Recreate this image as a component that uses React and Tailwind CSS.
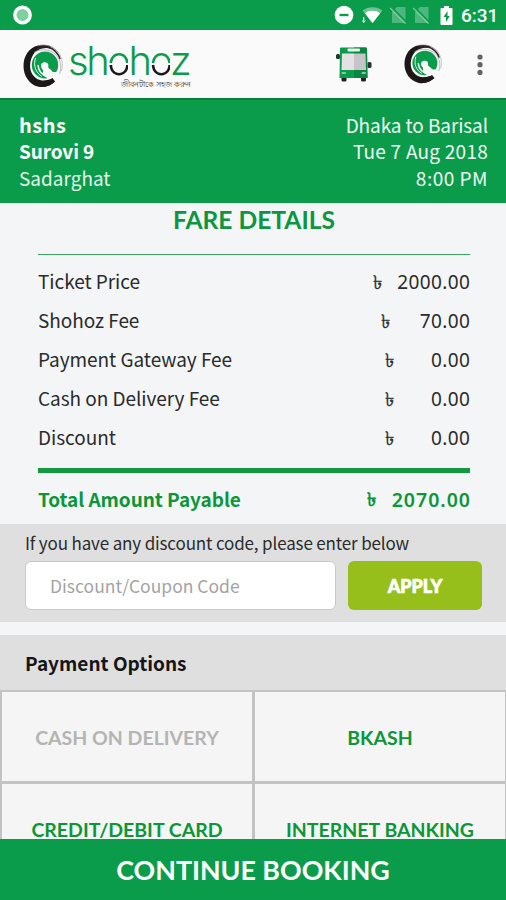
const LABEL = "font-['Noto_Sans_CJK_SC','Noto_Sans',sans-serif]";
const HEADING = "font-['Lato','Noto_Sans',sans-serif]";

const fares = [
  { label: 'Ticket Price', amount: '2000.00', width: 'w-[97px]' },
  { label: 'Shohoz Fee', amount: '70.00', width: 'w-[89px]' },
  { label: 'Payment Gateway Fee', amount: '0.00', width: 'w-[85px]' },
  { label: 'Cash on Delivery Fee', amount: '0.00', width: 'w-[85px]' },
  { label: 'Discount', amount: '0.00', width: 'w-[85px]' },
];

const options = [
  { name: 'CASH ON DELIVERY', disabled: true },
  { name: 'BKASH' },
  { name: 'CREDIT/DEBIT CARD' },
  { name: 'INTERNET BANKING' },
];

// Brush circle with the green disc inside
function BrandMark({ className }) {
  return (
    <svg viewBox="0 0 40 44" preserveAspectRatio="none" className={className} fill="none">
      <path d="M32 37.500C28 41.500 22 44 15.500 42.800C6 40.500 .5 31.500 .5 22C.5 12 6 3.500 15 1.500C19 .6 24 .8 28 2.500L27 4.500C20 3 13 6 10 11C6.500 17 6 25 9.500 30.500C14 37 22 38.500 29 34.500Z" fill="#1d1718" />
      <path d="M14 5C20 1.500 28 2.500 32.500 7.500C35 10 36.500 12.500 37 15" stroke="#2b2425" strokeWidth="1.700" />
      <path d="M14 2C22 -.5 31 2 35.500 9" stroke="#8a8586" strokeWidth=".8" />
      <path d="M34 6.500C39 12 40.500 20 38.500 27" stroke="#b9b6b6" strokeWidth=".8" />
      <path d="M11 8.500C19 3.500 30 5.500 35 13C38 18 38.500 25 36.500 30" stroke="#a9a5a6" strokeWidth=".8" />
      <ellipse cx="22" cy="21" rx="13.200" ry="13.500" fill="#0b9c4b" />
      <path d="M12.500 14C10 22 13 29 19 32.500" stroke="#fafafa" strokeWidth=".9" />
      <path d="M15 21C15.500 28 19 31.500 26 33" stroke="#fafafa" strokeWidth="1.500" />
      <path d="M19.500 24.500C20.500 27.500 19.500 29 20.500 31.500L26 35.500L33 37L38 31L34 28.500C31.500 27.500 30 29 28.500 26.500C27.500 25 26 25 25 23Z" fill="#fafafa" />
      <circle cx="21.700" cy="22" r="3.700" fill="#fafafa" />
      <path d="M32 37.500L29.500 34C27 35.500 24 36.700 20.500 36.500L20 43C25 42.500 29 40.500 32 37.500Z" fill="#1d1718" />
    </svg>
  );
}

function BusIcon() {
  return (
    <svg viewBox="0 0 36 35" className="w-9 h-[35px]">
      <rect x="0" y="7" width="4" height="5" rx="1.500" fill="#26352c" />
      <rect x="31.500" y="15" width="4" height="6" rx="1.500" fill="#26352c" />
      <rect x="5.500" y="28" width="5" height="6.500" rx="1.500" fill="#222" />
      <rect x="25" y="28" width="5" height="6.500" rx="1.500" fill="#222" />
      <path d="M4 1.500Q4 .5 5 .5H30Q31 .5 31 2L31.500 31H3.500Z" fill="#0b9c4b" />
      <path d="M18 .5H30Q31 .5 31 2L31.500 31H18Z" fill="#088741" />
      <rect x="11.500" y="1.600" width="12.500" height="3" rx="1" fill="#e8f3ec" />
      <path d="M6 6.500H18V23H5.500Z" fill="#e3e1e4" />
      <path d="M18 6.500H29.500L30 23H18Z" fill="#c6c4c8" />
      <rect x="5.500" y="25" width="4.500" height="2" rx="1" fill="#8fc6a5" />
      <rect x="25.500" y="25" width="4.500" height="2" rx="1" fill="#8fc6a5" />
    </svg>
  );
}

function NoSim() {
  return (
    <svg viewBox="0 0 18 18" className="w-[18px] h-[18px]">
      <path d="M7 1H15.500V17H2V6Z" fill="#fff" opacity=".28" />
      <path d="M1 1.500L16.500 17" stroke="#0b9c4b" strokeWidth="2.600" />
      <path d="M0 2L15.500 17.500" stroke="#fff" strokeWidth="1.200" opacity=".5" />
    </svg>
  );
}

function StatusBar() {
  return (
    <div className="h-[30px] shrink-0 bg-[#0b9c4b] flex items-center justify-between pl-[13px] pr-[9px]">
      <svg viewBox="0 0 20 20" className="w-5 h-5">
        <circle cx="9.500" cy="10" r="7.700" fill="#7fcf9f" stroke="#fff" strokeWidth="3.400" />
      </svg>
      <div className="flex items-center">
        <svg viewBox="0 0 20 20" className="w-5 h-5 mr-[8px]">
          <circle cx="10" cy="10" r="9.300" fill="#fff" />
          <rect x="5.500" y="8.800" width="9" height="2.400" fill="#0b9c4b" />
        </svg>
        <svg viewBox="0 0 21 18" className="w-[21px] h-[18px] mr-[7px]">
          <path d="M.5 4.500C6 0 15 0 20.500 4.500L10.500 17Z" fill="#fff" opacity=".4" />
          <path d="M3 7.200C7.500 4 13.500 4 18.200 7.200L10.500 17Z" fill="#fff" />
          <path d="M1.800 11V16M.3 14.500L1.800 16.500L3.300 14.500" stroke="#fff" strokeWidth="1" fill="none" />
        </svg>
        <div className="mr-[5px]"><NoSim /></div>
        <div className="mr-[9px]"><NoSim /></div>
        <svg viewBox="0 0 13 19" className="w-[13px] h-[19px] mr-[8px]">
          <path d="M4 0H9V2H11.500Q12.500 2 12.500 3V18Q12.500 19 11.500 19H1.500Q.5 19 .5 18V3Q.5 2 1.500 2H4Z" fill="#fff" />
          <path d="M7.500 5L3.500 11H6V16L9.800 10H7.500Z" fill="#0b9c4b" />
        </svg>
        <span className="font-['Roboto',sans-serif] font-medium text-[19px] leading-none text-white w-[36px] pt-px">6:31</span>
      </div>
    </div>
  );
}

function SplitO() {
  return (
    <span className="bg-[linear-gradient(to_bottom,#0b9c4b_0_55%,transparent_55%_60%,#1d1718_60%)] bg-clip-text text-transparent">o</span>
  );
}

function AppBar() {
  return (
    <div className="h-[70px] shrink-0 bg-[#fafafa] border-b-2 border-[#07803a] flex items-start">
      <BrandMark className="w-10 h-[44px] ml-[23px] mt-[14px]" />
      <div className="ml-[5px] mt-[14px] w-[128px] flex flex-col">
        <div className="h-[34px] leading-[34px] text-[40px] font-light tracking-[-2.500px] text-[#0b9c4b] font-['Inter',sans-serif] whitespace-nowrap">
          sh<SplitO />h<SplitO />z
        </div>
        <div className="h-[12px] text-[8px] leading-[12px] text-right text-[#333] pr-[5px] whitespace-nowrap">জীবনটাকে সহজ করুন</div>
      </div>
      <div className="ml-[140px] mt-[17px]"><BusIcon /></div>
      <BrandMark className="w-[38px] h-[40px] ml-[32px] mt-[14px]" />
      <svg viewBox="0 0 6 22" className="w-1.5 h-[22px] ml-[35px] mt-[24px]" fill="#626262">
        <circle cx="3" cy="3" r="2.600" />
        <circle cx="3" cy="10.700" r="2.600" />
        <circle cx="3" cy="18.400" r="2.600" />
      </svg>
    </div>
  );
}

function TripSummary() {
  return (
    <div className={`h-[103px] shrink-0 bg-[#0b9c4b] text-white flex justify-between pl-[19px] pr-[18px] pt-[12px] text-[19px] leading-[26.4px] ${LABEL}`}>
      <div>
        <p className="font-bold text-[20px] tracking-[0.500px]">hshs</p>
        <p className="font-bold tracking-[-0.1px]">Surovi 9</p>
        <p className="text-[#e3f5ea]">Sadarghat</p>
      </div>
      <div className="text-right text-[#f0faf4]">
        <p className="tracking-[-0.1px]">Dhaka to Barisal</p>
        <p className="tracking-[0.250px]">Tue 7 Aug 2018</p>
        <p className="tracking-[0.500px]">8:00 PM</p>
      </div>
    </div>
  );
}

function FareDetails() {
  return (
    <div className="h-[321px] shrink-0 pl-[38px] pr-9 bg-[#f3f5f7]">
      <h2 className={`h-[52px] border-b border-[#3ea35f] text-center text-[24.6px] leading-[33px] font-bold text-[#0d9640] ${HEADING}`}>FARE DETAILS</h2>
      <div className="pt-[6px] text-[#2b2b2b]">
        {fares.map((f) => (
          <div key={f.label} className="h-[39px] flex justify-between text-[19px] leading-[39px]">
            <span className={`tracking-[-0.050px] ${LABEL}`}>{f.label}</span>
            <span className={`flex justify-between pt-[2px] font-['Noto_Sans',sans-serif] ${f.width}`}>
              <span className="font-medium [-webkit-text-stroke:0.300px_#2b2b2b]">৳</span>
              <span className="tracking-[0.400px] -mr-[0.400px]">{f.amount}</span>
            </span>
          </div>
        ))}
      </div>
      <div className="mt-[12px] h-[5px] bg-[#129a43]" />
      <div className="h-[51px] flex justify-between text-[19px] leading-[51px] font-semibold text-[#0d9637]">
        <span className={`font-bold tracking-[-0.050px] ${LABEL}`}>Total Amount Payable</span>
        <span className="flex justify-between w-[103px] pt-px font-['Noto_Sans',sans-serif]">
          <span>৳</span>
          <span className="text-[19.5px] tracking-[1px] -mr-px">2070.00</span>
        </span>
      </div>
    </div>
  );
}

function DiscountForm() {
  return (
    <div className={`h-[98px] shrink-0 bg-[#dfdfdf] pl-[25px] pr-6 ${LABEL}`}>
      <p className="h-[37px] leading-[38px] text-[17px] tracking-[-0.150px] text-[#2b2b2b] whitespace-nowrap">If you have any discount code, please enter below</p>
      <div className="flex justify-between">
        <input
          type="text"
          placeholder="Discount/Coupon Code"
          className="w-[311px] h-[49px] rounded-md border border-[#c9c9c9] bg-white pl-6 text-[17.5px] placeholder:text-[#a3a3a3] outline-none"
        />
        <button className="w-[134px] h-[49px] rounded-md bg-[#96bf1b] text-white text-[18px] pt-[2px] font-black [-webkit-text-stroke:0.700px_white] font-['Lato',sans-serif]">APPLY</button>
      </div>
    </div>
  );
}

function PaymentOptions() {
  return (
    <div className="mt-[13px] flex-1 min-h-0 overflow-hidden flex flex-col">
      <h3 className={`h-[55px] shrink-0 bg-[#dfdfdf] pl-[25px] text-[19px] leading-[56px] font-bold text-[#151515] ${LABEL}`}>Payment Options</h3>
      <div className="grid grid-cols-2 gap-[3px] px-[2px] pr-px pt-[2px] bg-[#c3c3c3]">
        {options.map((o) => (
          <div
            key={o.name}
            className={`h-[89px] bg-[#f5f5f5] flex items-center justify-center pt-[3px] text-[19.5px] font-bold whitespace-nowrap ${HEADING} ${o.disabled ? 'text-[#b4b4b4]' : 'text-[#0d9637]'}`}
          >
            {o.name}
          </div>
        ))}
      </div>
    </div>
  );
}

export default function App() {
  return (
    <div className="w-[506px] h-[900px] flex flex-col overflow-hidden bg-[#f3f5f7]">
      <StatusBar />
      <AppBar />
      <TripSummary />
      <FareDetails />
      <DiscountForm />
      <PaymentOptions />
      <button className={`h-[61px] shrink-0 bg-[#0b9c4b] text-white text-[26.8px] pt-[2px] font-bold ${HEADING}`}>CONTINUE BOOKING</button>
    </div>
  );
}
